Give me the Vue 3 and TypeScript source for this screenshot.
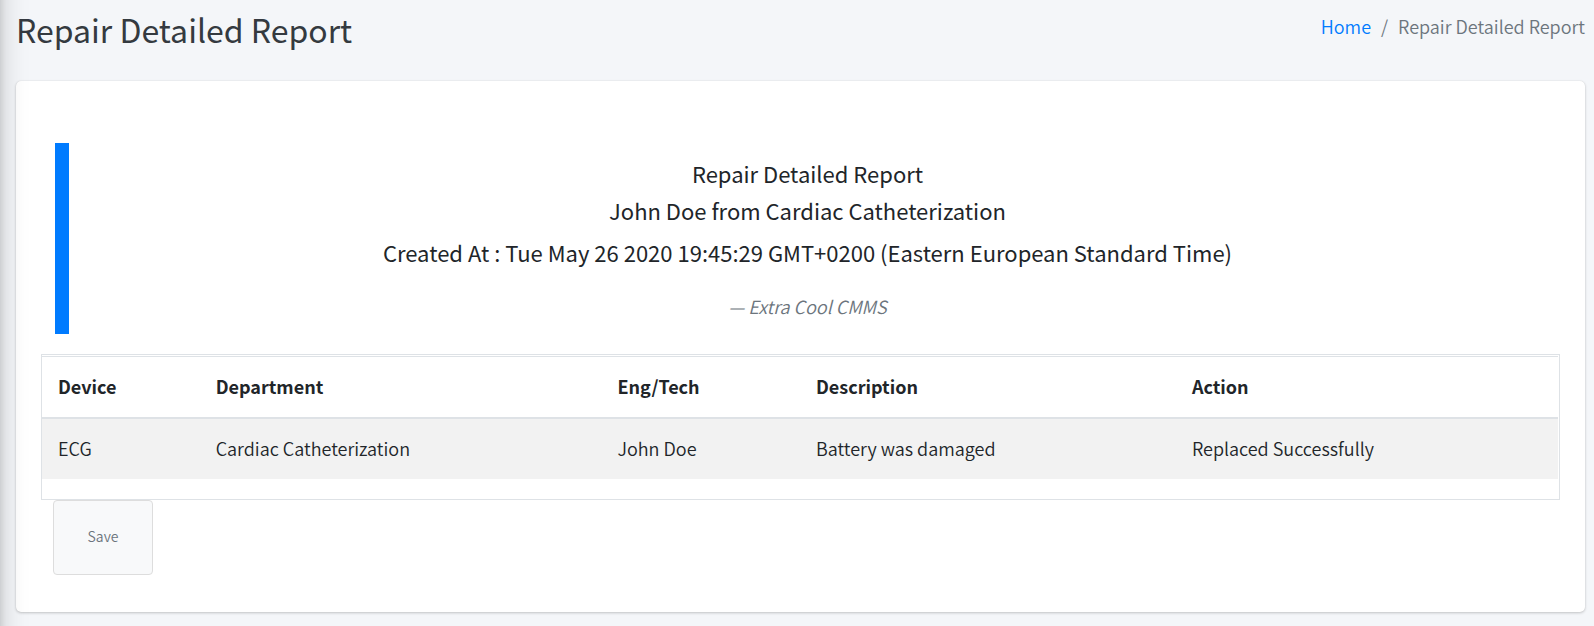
<script setup lang="ts">
interface Repair {
  device: string
  department: string
  engineer: string
  description: string
  action: string
}

const title = 'Repair Detailed Report'
const createdAt = 'Tue May 26 2020 19:45:29 GMT+0200 (Eastern European Standard Time)'
const repairs: Repair[] = [
  {
    device: 'ECG',
    department: 'Cardiac Catheterization',
    engineer: 'John Doe',
    description: 'Battery was damaged',
    action: 'Replaced Successfully',
  },
]
</script>

<template>
  <div class="page">
    <header class="page-header">
      <h1>{{ title }}</h1>
      <nav aria-label="Breadcrumb">
        <ol class="breadcrumb">
          <li><a href="#">Home</a></li>
          <li aria-current="page">{{ title }}</li>
        </ol>
      </nav>
    </header>

    <main class="card">
      <blockquote class="summary">
        <p>{{ title }}<br />John Doe from Cardiac Catheterization</p>
        <p>Created At : {{ createdAt }}</p>
        <footer>— <cite>Extra Cool CMMS</cite></footer>
      </blockquote>

      <div class="table-frame">
        <table>
          <colgroup>
            <col class="col-device" />
            <col class="col-department" />
            <col class="col-engineer" />
            <col class="col-description" />
            <col />
          </colgroup>
          <thead>
            <tr>
              <th scope="col">Device</th>
              <th scope="col">Department</th>
              <th scope="col">Eng/Tech</th>
              <th scope="col">Description</th>
              <th scope="col">Action</th>
            </tr>
          </thead>
          <tbody>
            <tr v-for="repair in repairs" :key="repair.device">
              <td>{{ repair.device }}</td>
              <td>{{ repair.department }}</td>
              <td>{{ repair.engineer }}</td>
              <td>{{ repair.description }}</td>
              <td>{{ repair.action }}</td>
            </tr>
          </tbody>
        </table>
      </div>

      <button type="button" class="save">Save</button>
    </main>
    <div class="edge-shadow" aria-hidden="true"></div>
  </div>
</template>

<style>
body {
  margin: 0;
  background: #f4f6f9;
}
</style>

<style scoped>
.page {
  box-sizing: border-box;
  min-height: 100vh;
  padding: 7px 9px 13px 16px;
  color: #212529;
  font-family: "Source Sans Pro", "Noto Sans CJK SC", "Noto Sans", sans-serif;
  font-size: 18px;
  font-weight: 350;
  line-height: 30px;
}

.page-header {
  display: flex;
  justify-content: space-between;
  align-items: flex-start;
  margin-bottom: 30px;
}

h1 {
  margin: 0;
  color: #343a40;
  font-size: 32px;
  font-weight: 400;
  line-height: 44px;
}

.breadcrumb {
  display: flex;
  margin: 4px 0 0;
  padding: 0;
  list-style: none;
  color: #6c757d;
}

.breadcrumb li + li::before {
  content: "/";
  padding: 0 10px;
}

a {
  color: #007bff;
  text-decoration: none;
}

.card {
  padding: 62px 25px 37px;
  border-radius: 5px;
  background: #fff;
  box-shadow: 0 0 1px rgba(0, 0, 0, 0.125), 0 1px 3px rgba(0, 0, 0, 0.2);
}

.summary {
  margin: 0 14px 20px;
  padding: 12px 14px 13px;
  border-left: 14px solid #007bff;
  text-align: center;
}

.summary p {
  margin: 0 0 5px;
  font-size: 22px;
  font-weight: 400;
  line-height: 37px;
}

.summary footer {
  margin-top: 20px;
  color: #6c757d;
  font-style: italic;
}

.table-frame {
  padding: 1px 1px 20px 0;
  border: 1px solid #dee2e6;
}

table {
  width: 100%;
  border-spacing: 0;
  table-layout: fixed;
}

.col-device {
  width: 10.4%;
}

.col-department {
  width: 26.5%;
}

.col-engineer {
  width: 13.1%;
}

.col-description {
  width: 24.8%;
}

th,
td {
  padding: 14px 16px 16px;
  text-align: left;
}

th {
  border-top: 1px solid #dee2e6;
  border-bottom: 2px solid #dee2e6;
  font-weight: 700;
}

td {
  background: #f2f2f2;
}

.save {
  display: block;
  box-sizing: border-box;
  min-width: 100px;
  height: 75px;
  margin-left: 12px;
  padding-bottom: 4px;
  border: 1px solid #ddd;
  border-radius: 4px;
  background: #f8f9fa;
  color: #6c757d;
  font: inherit;
  font-size: 14px;
}

/* Shadow cast on the content by the collapsed side menu */
.edge-shadow {
  position: fixed;
  top: -60px;
  bottom: -60px;
  left: -253px;
  width: 250px;
  box-shadow: 0 14px 28px rgba(0, 0, 0, 0.25), 0 10px 10px rgba(0, 0, 0, 0.22);
  pointer-events: none;
}
</style>
